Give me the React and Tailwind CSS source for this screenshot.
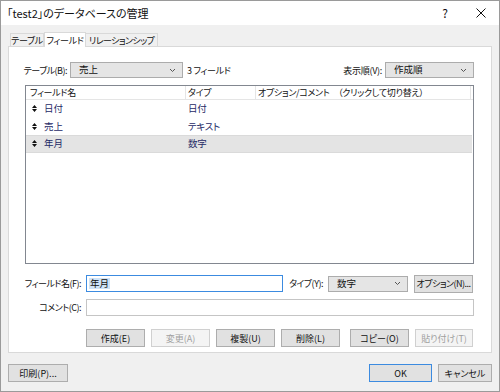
import React from "react";

function Chevron() {
  return (
    <svg width="7" height="5" viewBox="0 0 7 5" className="shrink-0">
      <path d="M1 1 L3.5 3.5 L6 1" fill="none" stroke="#555" strokeWidth="1" />
    </svg>
  );
}

function Handle() {
  return (
    <svg width="5" height="7" viewBox="0 0 5 7" className="shrink-0">
      <path d="M2.5 0 L5 3 L0 3 Z M0 4 L5 4 L2.5 7 Z" fill="#111" />
    </svg>
  );
}

function Btn({ children, disabled, primary, className = "" }) {
  return (
    <div
      className={
        "h-[18px] flex items-center justify-center text-[9px] leading-none whitespace-nowrap border " +
        (disabled
          ? "border-[#d0d0d0] bg-[#f4f4f4] text-[#a0a0a0] "
          : primary
          ? "border-[#3c8be0] bg-[#e1e1e1] text-[#111] "
          : "border-[#adadad] bg-[#e1e1e1] text-[#111] ") +
        className
      }
    >
      {children}
    </div>
  );
}

function Select({ value, className = "" }) {
  return (
    <div
      className={
        "h-[16px] border border-[#acacac] bg-[#e5e5e5] flex items-center justify-between pl-[8px] pr-[6px] text-[9.5px] leading-none text-[#111] whitespace-nowrap " +
        className
      }
    >
      <span>{value}</span>
      <Chevron />
    </div>
  );
}

function Label({ children, className = "" }) {
  return (
    <div className={"flex justify-end shrink-0 text-[9px] leading-none tracking-[-0.5px] " + className}>
      {children}
    </div>
  );
}

const rows = [
  { name: "日付", type: "日付" },
  { name: "売上", type: "テキスト" },
  { name: "年月", type: "数字", sel: true },
];

export default function App() {
  return (
    <div className="font-['Noto_Sans_CJK_JP','Noto_Sans',sans-serif] [font-feature-settings:'palt'] w-[500px] h-[392px] border border-[#9a9a9a] bg-[#f0f0f0] flex flex-col overflow-hidden text-[#111] whitespace-nowrap">
      {/* title bar */}
      <div className="h-[24px] bg-white flex items-center shrink-0">
        <span className="ml-[6px] text-[11px] leading-none">「test2」のデータベースの管理</span>
        <span className="ml-auto text-[12px] leading-none mr-[28px]">?</span>
        <svg width="10" height="10" viewBox="0 0 10 10" className="mr-[13px]">
          <path d="M0.5 0.5 L9.5 9.5 M9.5 0.5 L0.5 9.5" stroke="#111" strokeWidth="1" />
        </svg>
      </div>

      {/* tabs */}
      <div className="flex items-end h-[21px] pl-[9px] shrink-0">
        <div className="h-[13px] w-[34px] justify-center border border-b-0 border-[#d9d9d9] bg-[#f0f0f0] flex items-center text-[9px] leading-none tracking-[-0.3px]">
          テーブル
        </div>
        <div className="h-[15px] w-[42px] justify-center border border-b-0 border-[#d9d9d9] bg-white flex items-center text-[9px] leading-none tracking-[-0.3px] -mb-px relative z-10">
          フィールド
        </div>
        <div className="h-[13px] px-[3px] justify-center border border-b-0 border-l-0 border-[#d9d9d9] bg-[#f0f0f0] flex items-center text-[9px] leading-none tracking-[-0.6px]">
          リレーションシップ
        </div>
      </div>

      {/* panel */}
      <div className="mx-[7px] w-[484px] h-[307px] border border-[#d9d9d9] bg-white shrink-0 pl-[16px] pr-[17px] pt-[15px] flex flex-col">
        <div className="flex items-center h-[16px]">
          <Label className="w-[42px] mr-[3px]">テーブル(B):</Label>
          <Select value="売上" className="w-[113px]" />
          <span className="text-[9px] leading-none ml-[4px] tracking-[-0.3px]">3 フィールド</span>
          <span className="text-[9px] leading-none ml-auto mr-[3px] tracking-[-0.3px]">表示順(V):</span>
          <Select value="作成順" className="w-[89px]" />
        </div>

        {/* list */}
        <div className="mt-[7px] h-[179px] border border-[#828790] flex flex-col">
          <div className="h-[14px] shrink-0 flex items-center text-[9px] leading-none tracking-[-0.3px] border-b border-[#e5e5e5]">
            <div className="w-[160px] pl-[4px] h-full flex items-center border-r border-[#e5e5e5]">フィールド名</div>
            <div className="w-[70px] pl-[2px] h-full flex items-center border-r border-[#e5e5e5]">タイプ</div>
            <div className="flex-1 pl-[2px] h-full flex items-center border-r border-[#e5e5e5]">
              オプション/コメント　（クリックして切り替え）
            </div>
            <div className="w-[2px]" />
          </div>
          <div>
            {rows.map((r) => (
              <div
                key={r.name}
                className={
                  "h-[17.5px] flex items-center text-[9.5px] leading-none text-[#1e2a66] " +
                  (r.sel ? "bg-[#e4e4e4] border-y border-[#dadada] mr-[1px]" : "")
                }
              >
                <div className="w-[160px] flex items-center pl-[6px]">
                  <Handle />
                  <span className="ml-[7px]">{r.name}</span>
                </div>
                <div className="pl-[2px] tracking-[-0.3px]">{r.type}</div>
              </div>
            ))}
          </div>
        </div>

        {/* field name row */}
        <div className="mt-[11px] flex items-center h-[17px]">
          <Label className="w-[56px] mr-[5px]">フィールド名(F):</Label>
          <div className="w-[197px] h-[17px] border border-[#3c8be0] flex items-center pl-[2px]">
            <span className="text-[9.5px] leading-none bg-[#cfe3f7] px-[1px] py-[1px]">年月</span>
          </div>
          <Label className="w-[40px] mr-[5px]">タイプ(Y):</Label>
          <Select value="数字" className="w-[80px]" />
          <Btn className="w-[59px] ml-[6px] tracking-[-0.5px]">オプション(N)...</Btn>
        </div>

        {/* comment */}
        <div className="mt-[7px] flex items-center h-[17px]">
          <Label className="w-[56px] mr-[5px]">コメント(C):</Label>
          <div className="flex-1 h-[17px] border border-[#c5c5c5]" />
        </div>

        {/* buttons */}
        <div className="mt-[13px] flex items-center pl-[61px]">
          <Btn className="w-[59px]">作成(E)</Btn>
          <Btn className="w-[59px] ml-[6px]" disabled>変更(A)</Btn>
          <Btn className="w-[59px] ml-[6px]">複製(U)</Btn>
          <Btn className="w-[59px] ml-[6px]">削除(L)</Btn>
          <Btn className="w-[59px] ml-[10px]">コピー(O)</Btn>
          <Btn className="w-[58px] ml-[6px]" disabled>貼り付け(T)</Btn>
        </div>
      </div>

      {/* bottom buttons */}
      <div className="mt-[11px] flex items-center px-[7px]">
        <Btn className="w-[60px]">印刷(P)...</Btn>
        <Btn className="w-[63px] ml-auto" primary>OK</Btn>
        <Btn className="w-[54px] ml-[6px]">キャンセル</Btn>
      </div>
    </div>
  );
}
